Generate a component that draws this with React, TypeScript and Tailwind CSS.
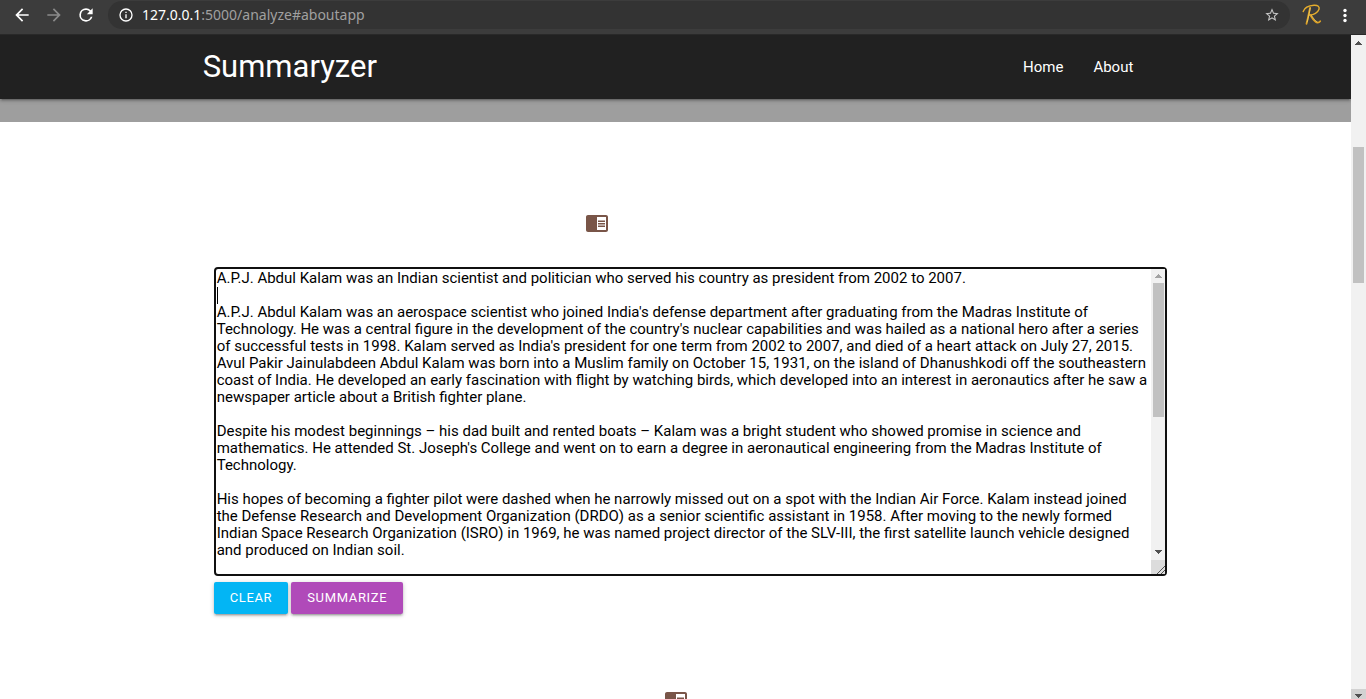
import React from "react";

const article = `A.P.J. Abdul Kalam was an Indian scientist and politician who served his country as president from 2002 to 2007.

A.P.J. Abdul Kalam was an aerospace scientist who joined India's defense department after graduating from the Madras Institute of Technology. He was a central figure in the development of the country's nuclear capabilities and was hailed as a national hero after a series of successful tests in 1998. Kalam served as India's president for one term from 2002 to 2007, and died of a heart attack on July 27, 2015. Avul Pakir Jainulabdeen Abdul Kalam was born into a Muslim family on October 15, 1931, on the island of Dhanushkodi off the southeastern coast of India. He developed an early fascination with flight by watching birds, which developed into an interest in aeronautics after he saw a newspaper article about a British fighter plane.

Despite his modest beginnings – his dad built and rented boats – Kalam was a bright student who showed promise in science and mathematics. He attended St. Joseph's College and went on to earn a degree in aeronautical engineering from the Madras Institute of Technology.

His hopes of becoming a fighter pilot were dashed when he narrowly missed out on a spot with the Indian Air Force. Kalam instead joined the Defense Research and Development Organization (DRDO) as a senior scientific assistant in 1958. After moving to the newly formed Indian Space Research Organization (ISRO) in 1969, he was named project director of the SLV-III, the first satellite launch vehicle designed and produced on Indian soil.`;

function MaterialIcon({ d, className }: { d: string; className?: string }) {
  return (
    <svg viewBox="0 0 24 24" fill="currentColor" aria-hidden="true" className={className}>
      <path d={d} />
    </svg>
  );
}

const BACK = "M20 11H7.83l5.59-5.59L12 4l-8 8 8 8 1.41-1.41L7.83 13H20v-2z";
const FORWARD = "M12 4l-1.41 1.41L16.17 11H4v2h12.17l-5.58 5.59L12 20l8-8z";
const RELOAD =
  "M17.65 6.35A7.96 7.96 0 0 0 12 4a8 8 0 1 0 7.73 10h-2.08A6 6 0 1 1 12 6c1.66 0 3.14.69 4.22 1.78L13 11h7V4l-2.35 2.35z";
const INFO =
  "M11 7h2v2h-2zm0 4h2v6h-2zm1-9a10 10 0 1 0 0 20 10 10 0 0 0 0-20zm0 18a8 8 0 1 1 0-16 8 8 0 0 1 0 16z";
const STAR =
  "M22 9.24l-7.19-.62L12 2 9.19 8.63 2 9.24l5.46 4.73L5.82 21 12 17.27 18.18 21l-1.63-7.03L22 9.24zM12 15.4l-3.76 2.27 1-4.28-3.32-2.88 4.38-.38L12 6.1l1.71 4.04 4.38.38-3.32 2.88 1 4.28L12 15.4z";
const READER =
  "M13 12h7v1.5h-7zm0-2.5h7V11h-7zm0 5h7V16h-7zM21 4H3c-1.1 0-2 .9-2 2v13c0 1.1.9 2 2 2h18c1.1 0 2-.9 2-2V6c0-1.1-.9-2-2-2zm0 15h-9V6h9v13z";

function Toolbar() {
  return (
    <header className="flex h-[35px] shrink-0 items-start border-b border-[#292929] bg-[#3c3c3c] pl-3 text-white">
      <button type="button" aria-label="Back" className="mt-[5px] mr-3">
        <MaterialIcon d={BACK} className="size-5" />
      </button>
      <button type="button" aria-label="Forward" className="mt-[5px] mr-3 text-[#8a8a8a]">
        <MaterialIcon d={FORWARD} className="size-5" />
      </button>
      <button type="button" aria-label="Reload" className="mt-[5px] mr-3">
        <MaterialIcon d={RELOAD} className="size-5" />
      </button>
      <div className="mt-px flex h-7 flex-1 items-center rounded-full bg-[#333333] px-[10px]">
        <MaterialIcon d={INFO} className="size-4" />
        <p className="ml-2 flex-1 font-['Noto_Sans',sans-serif] text-sm leading-5 text-[#a0a0a0]">
          <span className="text-white">127.0.0.1</span>:5000/analyze#aboutapp
        </p>
        <button type="button" aria-label="Bookmark this page" className="text-[#c6c6c6]">
          <MaterialIcon d={STAR} className="size-4" />
        </button>
      </div>
      <button type="button" aria-label="Profile" className="mt-1 ml-3">
        <svg viewBox="0 0 20 22" fill="none" strokeLinecap="round" strokeLinejoin="round" className="h-[22px] w-5">
          <path d="M1.2 7.5C2.5 3.5 7 1.6 12 1.3c4-.2 5.800 1.400 5 4C16 8.500 11.500 10.800 8 11" stroke="#e5ad2d" strokeWidth="1.400" />
          <path d="M8 4C7 8.500 6 14 4.500 19.800M8.200 11c2.300 3 4 7 7 7.500 1.500.2 2.300-.3 3-1.200" stroke="#dda126" strokeWidth="1.800" />
          <path d="M8.300 4C7.500 8 6.400 14 5.200 18M9.500 11.500c2 2.500 3.500 5.500 5.500 6.300" stroke="#f7df78" strokeWidth=".6" />
        </svg>
      </button>
      <button type="button" aria-label="Menu" className="mt-[5px] mr-[11px] ml-[13px]">
        <svg viewBox="0 0 20 20" fill="currentColor" className="size-5">
          <circle cx="10" cy="5.500" r="1.700" />
          <circle cx="10" cy="10.500" r="1.700" />
          <circle cx="10" cy="15.500" r="1.700" />
        </svg>
      </button>
    </header>
  );
}

function Arrow({ down, className }: { down?: boolean; className?: string }) {
  return (
    <svg viewBox="0 0 7 4" fill="currentColor" shapeRendering="crispEdges" aria-hidden="true" className={`h-1 w-[7px] ${className ?? ""}`}>
      <path d={down ? "M0 0h7v1H6v1H5v1H4v1H3V3H2V2H1V1H0z" : "M3 0h1v1h1v1h1v1h1v1H0V3h1V2h1V1h1z"} />
    </svg>
  );
}

function PageScrollbar() {
  return (
    <div aria-hidden="true" className="flex w-[15px] shrink-0 flex-col items-center bg-[#f1f1f1] text-[#505050]">
      <Arrow className="mt-[6px]" />
      <div className="min-h-0 basis-[102px]" />
      <div className="h-[136px] w-[11px] bg-[#c1c1c1]" />
      <div className="mt-auto flex h-[10px] w-full justify-center bg-[#d2d2d2] pt-[5px]">
        <Arrow down />
      </div>
    </div>
  );
}

function EditorScrollbar() {
  return (
    <div aria-hidden="true" className="flex w-[14px] shrink-0 flex-col items-center bg-[#f1f1f1] text-[#505050]">
      <Arrow className="mt-[5px] text-[#a3a3a3]" />
      <div className="mt-[5px] h-[134px] w-[11px] bg-[#c1c1c1]" />
      <Arrow down className="mt-auto mb-[6px]" />
      <div className="flex h-[14px] w-full items-end justify-end bg-[#dcdcdc]">
        <svg viewBox="0 0 8 8" stroke="#505050" className="size-2">
          <path d="M0 8L8 0M4 8l4-4" />
        </svg>
      </div>
    </div>
  );
}

export default function App() {
  return (
    <div className="flex h-screen flex-col bg-white font-[Roboto,sans-serif] text-[15px]">
      <Toolbar />
      <div className="flex min-h-0 flex-1">
        <div className="min-w-0 flex-1 overflow-hidden">
          <nav className="relative h-16 bg-[#212121] text-white shadow-[0_2px_2px_0_rgba(0,0,0,0.14),0_3px_1px_-2px_rgba(0,0,0,0.12),0_1px_5px_0_rgba(0,0,0,0.2)]">
            <div className="mx-auto flex h-full w-[70%] items-center justify-between">
              <a href="#" className="text-[31px] leading-[64px]">Summaryzer</a>
              <ul className="flex">
                <li><a href="#home" className="px-[15px] leading-[64px]">Home</a></li>
                <li><a href="#aboutapp" className="px-[15px] leading-[64px]">About</a></li>
              </ul>
            </div>
          </nav>
          <div className="h-[23px] bg-[#9e9e9e]" />
          <main className="mx-auto w-[70%] pt-[89px]">
            <section className="-mr-[19px] pl-[11px]">
              <div className="mr-[188px] flex justify-center">
                <label htmlFor="article" aria-label="Text to summarize">
                  <MaterialIcon d={READER} className="size-6 text-[#795548]" />
                </label>
              </div>
              <div className="relative mt-8 flex h-[309px] rounded border-2 border-[#101010]">
                <textarea
                  id="article"
                  aria-label="Text to summarize"
                  defaultValue={article}
                  spellCheck={false}
                  className="block min-w-0 flex-1 resize-none overflow-hidden px-px pt-px leading-[17px] text-black outline-none"
                />
                <EditorScrollbar />
                <span aria-hidden="true" className="absolute top-[18px] left-px h-[17px] w-px bg-black" />
              </div>
              <div className="mt-[6px] flex gap-[3px] text-[13px] text-white">
                <button type="button" className="h-8 rounded-xs bg-[#03b5f4] px-4 tracking-wider uppercase shadow-[0_2px_2px_0_rgba(0,0,0,0.14),0_3px_1px_-2px_rgba(0,0,0,0.12),0_1px_5px_0_rgba(0,0,0,0.2)]">Clear</button>
                <button type="button" className="h-8 rounded-xs bg-[#b04ab9] px-4 tracking-wider uppercase shadow-[0_2px_2px_0_rgba(0,0,0,0.14),0_3px_1px_-2px_rgba(0,0,0,0.12),0_1px_5px_0_rgba(0,0,0,0.2)]">Summarize</button>
              </div>
            </section>
            <section className="mt-[74px] flex justify-center">
              <MaterialIcon d={READER} className="size-6 text-[#795548]" />
            </section>
          </main>
        </div>
        <PageScrollbar />
      </div>
    </div>
  );
}
